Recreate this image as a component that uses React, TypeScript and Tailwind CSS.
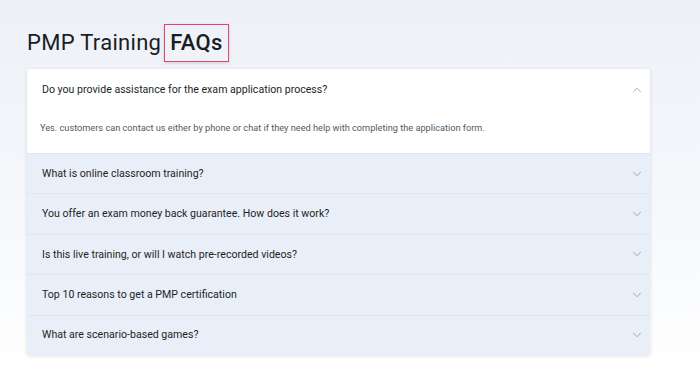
import { ChevronDown, ChevronUp } from 'lucide-react';

const faqs = [
    {
        q: 'Do you provide assistance for the exam application process?',
        a: 'Yes. customers can contact us either by phone or chat if they need help with completing the application form.',
        open: true,
    },
    { q: 'What is online classroom training?' },
    { q: 'You offer an exam money back guarantee. How does it work?' },
    { q: 'Is this live training, or will I watch pre-recorded videos?' },
    { q: 'Top 10 reasons to get a PMP certification' },
    { q: 'What are scenario-based games?' },
];

export default function App() {
    return (
        <div
            className="min-h-[379px] w-full bg-gradient-to-b from-[#edf1f7] via-[#f5f7fb] to-white pt-[24px] pl-[27px] pr-[50px]"
            style={{ fontFamily: 'Roboto, "Liberation Sans", sans-serif' }}
        >
            <h1 className="flex items-center text-[22px] leading-none text-[#1a1d23] tracking-[0.3px] h-[38px]">
                <span className="font-normal">PMP Training</span>
                <span className="ml-[3px] border-[1.5px] border-[#e5446d] px-[5px] h-[38px] flex items-center font-medium shadow-[0_1px_3px_rgba(0,0,0,0.15)]">
                    FAQs
                </span>
            </h1>

            <div className="mt-[7px] w-[623px] rounded-[3px] shadow-[0_1px_4px_rgba(0,0,0,0.12)] overflow-hidden">
                {faqs.map((item, i) => (
                    <div
                        key={i}
                        className={`${item.open ? 'bg-white' : 'bg-[#e9eff8] border-t border-[#dfe5ee]'}`}
                    >
                        <div className={`flex items-center justify-between pl-[15px] pr-[6px] ${item.open ? 'h-[41px]' : 'h-[39.4px]'}`}>
                            <span className="text-[10.6px] text-[#1c1f24]">{item.q}</span>
                            {item.open ? (
                                <ChevronUp size={14} strokeWidth={1.3} className="text-[#8a8f99]" />
                            ) : (
                                <ChevronDown size={14} strokeWidth={1.3} className="text-[#8a8f99]" />
                            )}
                        </div>
                        {item.open && (
                            <div className="pl-[13px] pb-[18px] pt-[11px] text-[9.2px] leading-[14px] text-[#555a61]">{item.a}</div>
                        )}
                    </div>
                ))}
            </div>
        </div>
    );
}
